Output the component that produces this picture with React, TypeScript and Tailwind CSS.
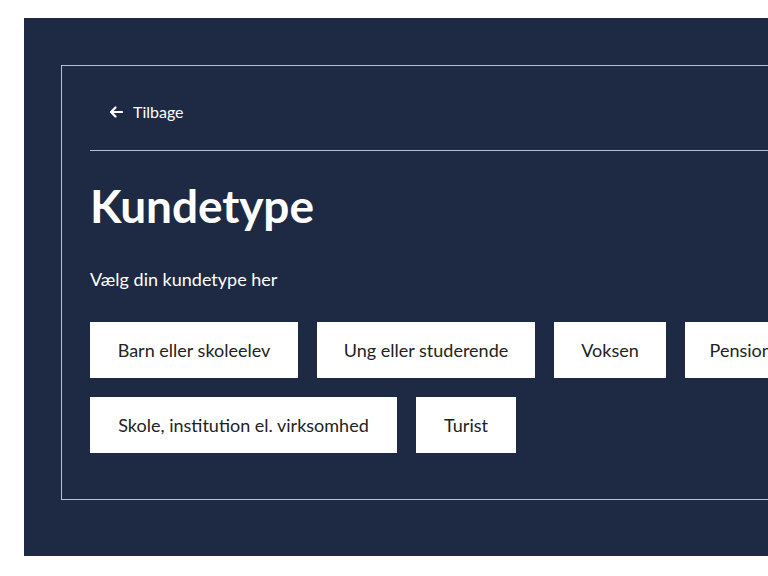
import React from "react";

const options = [
  { label: "Barn eller skoleelev", w: "w-[208px]" },
  { label: "Ung eller studerende", w: "w-[218px]" },
  { label: "Voksen", w: "w-[112px]" },
  { label: "Pensionist", w: "w-[130px]" },
  { label: "Skole, institution el. virksomhed", w: "w-[307px]" },
  { label: "Turist", w: "w-[100px]" },
];

export default function App() {
  return (
    <div className="w-[768px] h-[576px] overflow-hidden bg-white" style={{ fontFamily: "Lato, 'Noto Sans', sans-serif" }}>
      <div className="ml-[24px] mt-[18px] w-[800px] h-[538px] bg-[#1e2a44] pt-[47px] pl-[37px]">
        <div className="w-[760px] border border-[#b5c1d5] pl-[28px] pb-[46px]">
          <div className="pt-[34px] pb-[26px] border-b border-[#b5c1d5]">
            <button className="flex items-center gap-[10px] pl-[19px] h-[24px] text-white text-[16px]">
              <svg width="14" height="12" viewBox="0 0 14 12" fill="none" stroke="white" strokeWidth="2.2" strokeLinecap="round" strokeLinejoin="round">
                <path d="M13 6H2M6.5 1.5L2 6l4.5 4.5" />
              </svg>
              <span>Tilbage</span>
            </button>
          </div>
          <h1 className="mt-[27px] text-white font-bold text-[46px] leading-[56px] tracking-[-0.1px]">Kundetype</h1>
          <p className="mt-[32px] text-white text-[18px] leading-[26px]">Vælg din kundetype her</p>
          <div className="mt-[30px] flex flex-wrap gap-x-[19px] gap-y-[19px] w-[800px]">
            {options.map((o) => (
              <button key={o.label} className={`${o.w} h-[56px] bg-white text-[#222] text-[18px] flex items-center justify-center whitespace-nowrap`}>
                {o.label}
              </button>
            ))}
          </div>
        </div>
      </div>
    </div>
  );
}
